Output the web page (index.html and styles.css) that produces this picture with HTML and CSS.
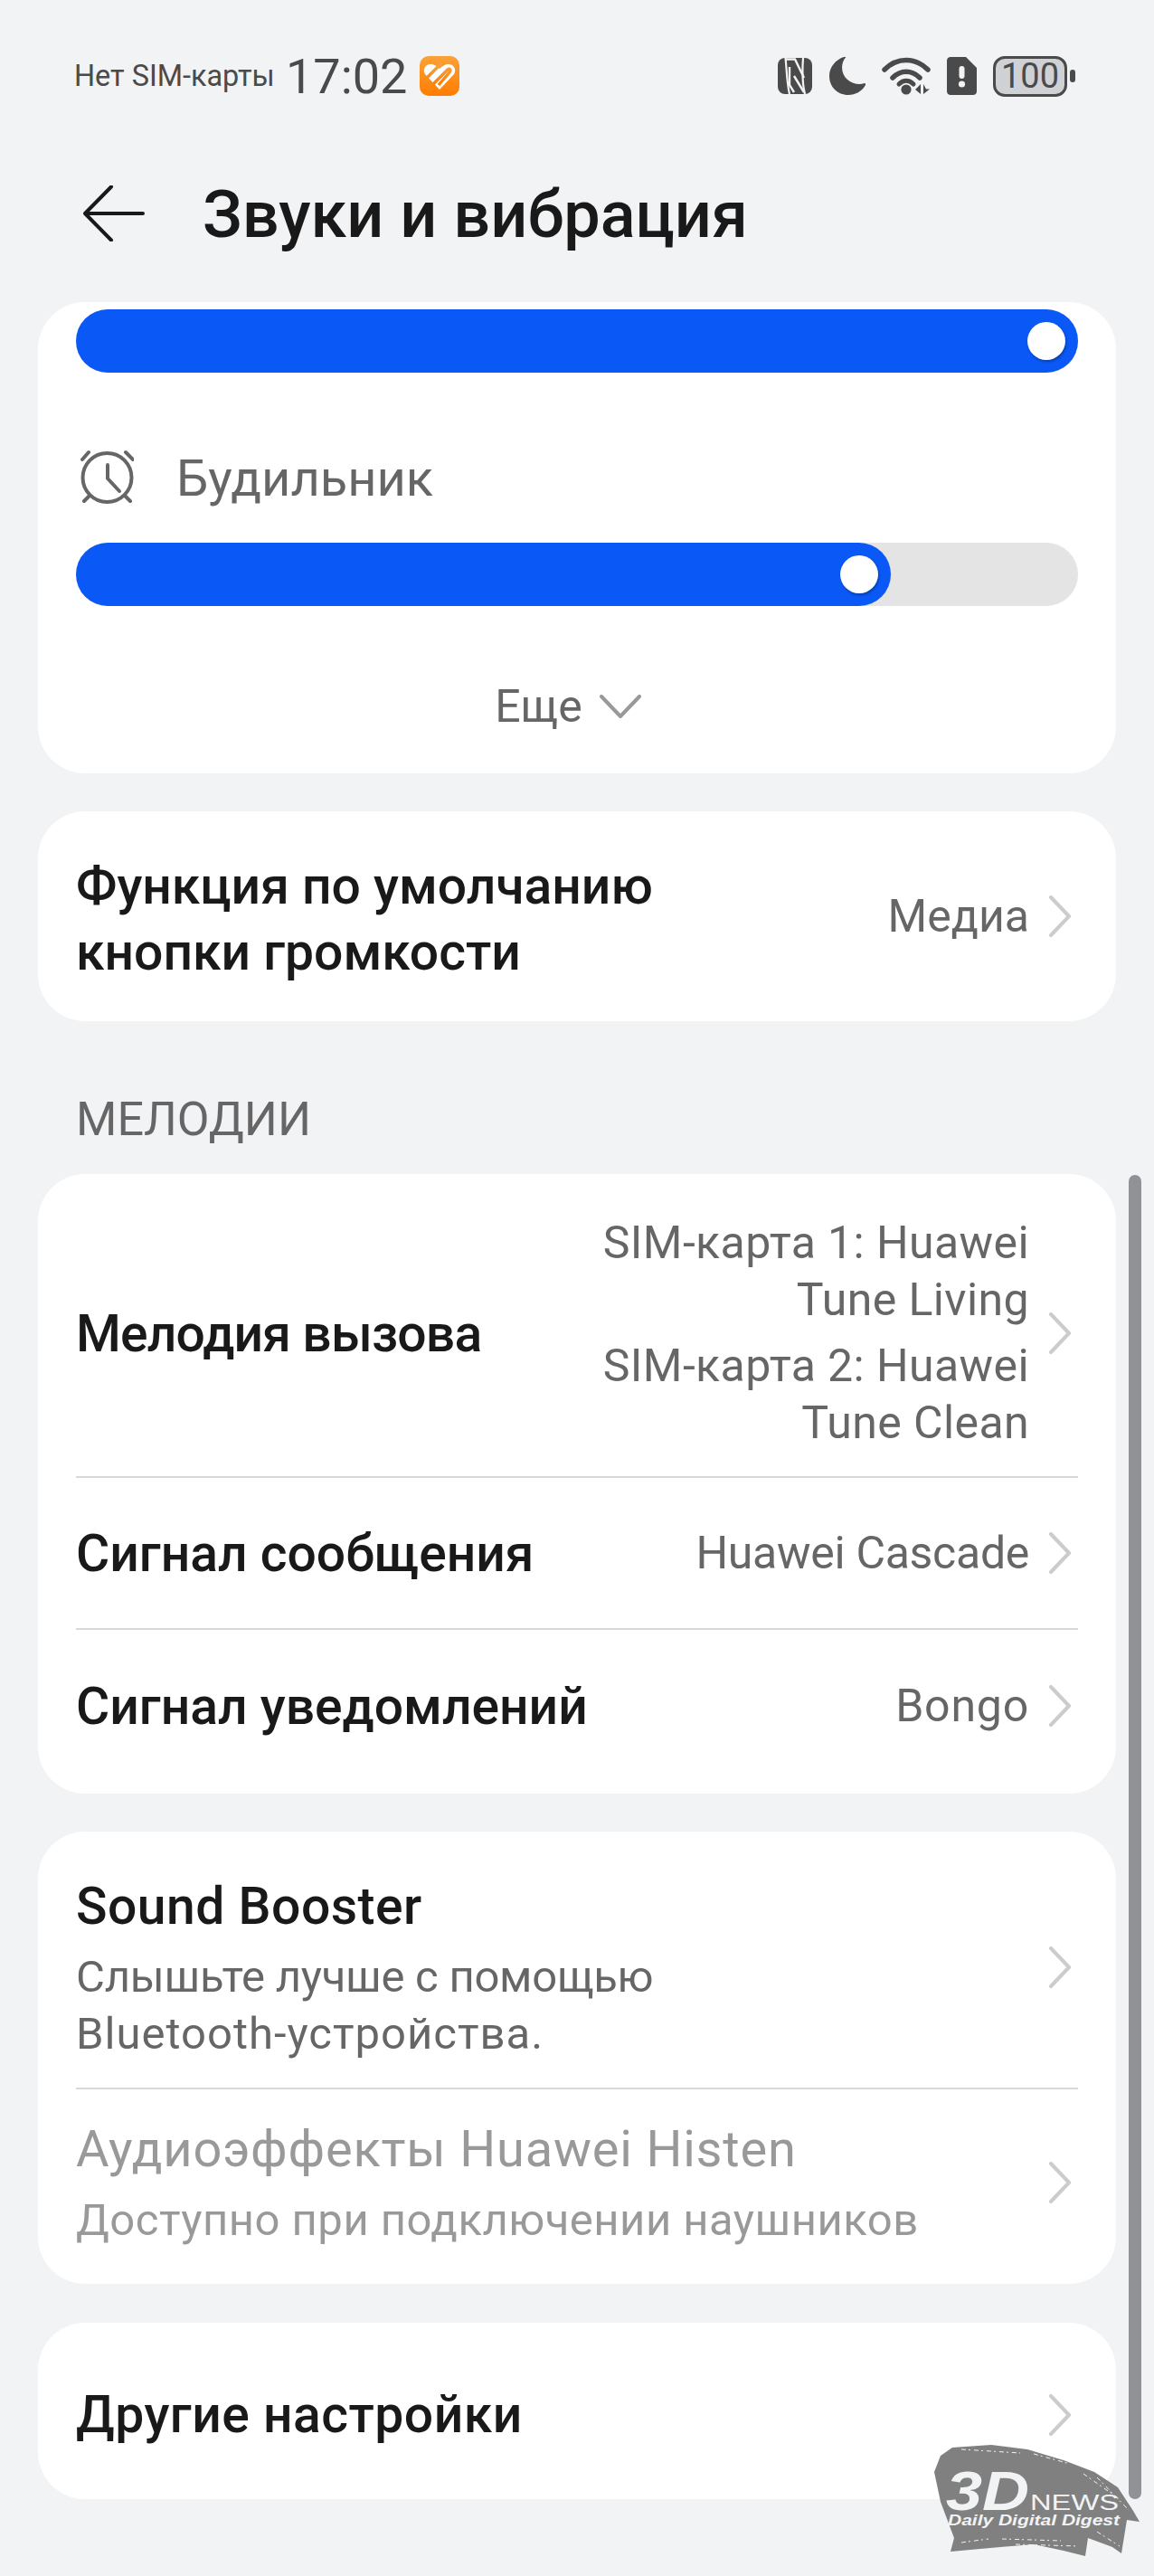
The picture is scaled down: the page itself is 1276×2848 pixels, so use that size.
FILE: index.html
```html
<!DOCTYPE html>
<html lang="ru">
<head>
    <meta charset="UTF-8">
    <meta name="viewport" content="width=device-width, initial-scale=1.0">
    <title>Звуки и вибрация</title>
    <link rel="stylesheet" href="styles.css">
</head>
<body>
    <div class="screen">
        <div class="status-bar">
            <span class="carrier">Нет SIM-карты</span>
            <span class="clock">17:02</span>
            <svg class="health-icon" viewBox="0 0 44 44">
                <defs>
                    <linearGradient id="healthFill" x1="0" y1="0" x2="0" y2="1">
                        <stop offset="0" stop-color="#f9a23a"/>
                        <stop offset="1" stop-color="#ff7d00"/>
                    </linearGradient>
                </defs>
                <rect width="44" height="44" rx="10" fill="url(#healthFill)"/>
                <path d="M22 37 L6 20 C3 15 6 9 12 9 C16 9 19 11 22 14 C25 11 28 9 32 9 C38 9 41 15 38 20 Z" fill="#fff"/>
                <path d="M8 24 L23 9 M15 31 L31 15 C33 13 35 15 33 18 L21 32" stroke="url(#healthFill)" stroke-width="3.4" fill="none"/>
            </svg>
            <div class="status-icons">
                <svg class="icon-nfc" viewBox="0 0 38 40">
                    <rect width="38" height="40" rx="8" fill="#4a4a4a"/>
                    <path d="M8.5 0 C10 14 10 28 13 40 M28 0 C27 14 27 28 30 40" fill="none" stroke="#f1f3f5" stroke-width="2.2"/>
                    <path d="M9 1.5 L19 1.5 L29 22 M13 10 L13 30 L18 38 M18 20 L29 38" fill="none" stroke="#f1f3f5" stroke-width="2.4"/>
                </svg>
                <svg class="icon-moon" viewBox="0 0 40 42">
                    <path d="M18 0.6 C12 8 13 19 20 25 C26 30 33 31 39 29 C40 29 40.5 30 40 31 C36 38 29 42 21 42 C9 42 0 33 0 21 C0 11 7 3 16 0 C18 -0.5 18.6 0 18 0.6 Z" fill="#4a4a4a"/>
                </svg>
                <svg class="icon-wifi" viewBox="0 0 55 42">
                    <path d="M3 14 C17 0 37 0 51 14" fill="none" stroke="#4a4a4a" stroke-width="5.5" stroke-linecap="round"/>
                    <path d="M12 23 C21 14 33 14 42 23" fill="none" stroke="#4a4a4a" stroke-width="5.5" stroke-linecap="round"/>
                    <path d="M19 30 C24 25 30 25 35 30" fill="none" stroke="#4a4a4a" stroke-width="5" stroke-linecap="round"/>
                    <circle cx="27" cy="36" r="5.6" fill="#4a4a4a"/>
                    <path d="M43 30 L43 41 L37 36 Z M46 30 L46 41 L53 35.5 L49 35.5 Z" fill="#4a4a4a"/>
                </svg>
                <svg class="icon-sim" viewBox="0 0 33 42">
                    <path d="M4 0 L21 0 L33 12 L33 38 C33 40.5 31 42 29 42 L4 42 C2 42 0 40.5 0 38 L0 4 C0 1.5 2 0 4 0 Z" fill="#4a4a4a"/>
                    <rect x="13.5" y="10" width="6" height="14" rx="3" fill="#f1f3f5"/>
                    <circle cx="16.5" cy="30" r="3.6" fill="#f1f3f5"/>
                </svg>
                <div class="battery">
                    <div class="battery-body">100</div>
                    <div class="battery-nub"></div>
                </div>
            </div>
        </div>

        <header class="title-bar">
            <svg class="back-arrow" viewBox="0 0 68 62">
                <path d="M31 1.5 L2 31 L31 60.5 M2 31 L66 31" fill="none" stroke="#191919" stroke-width="4" stroke-linecap="round" stroke-linejoin="round"/>
            </svg>
            <h1>Звуки и вибрация</h1>
        </header>

        <section class="card volume-card">
            <div class="slider">
                <div class="slider-fill" style="width: 100%"><span class="thumb"></span></div>
            </div>
            <div class="volume-label">
                <svg class="alarm-icon" viewBox="0 0 60 64">
                    <circle cx="30.5" cy="31" r="27" fill="none" stroke="#666" stroke-width="4"/>
                    <path d="M31 17 L31 32 L44 46" fill="none" stroke="#666" stroke-width="4" stroke-linecap="round" stroke-linejoin="round"/>
                    <path d="M3 11 L10 3 M51 3 L59 11 M5 57 L11 51 M50 51 L56 57" fill="none" stroke="#666" stroke-width="4" stroke-linecap="round"/>
                </svg>
                <span>Будильник</span>
            </div>
            <div class="slider">
                <div class="slider-fill" style="width: 81.3%"><span class="thumb"></span></div>
            </div>
            <div class="more-row">
                <span>Еще</span>
                <svg class="more-chevron" viewBox="0 0 46 26">
                    <path d="M2 2 L23 24 L44 2" fill="none" stroke="#999" stroke-width="4" stroke-linecap="round" stroke-linejoin="round"/>
                </svg>
            </div>
        </section>

        <section class="card key-card">
            <div class="row key-row">
                <div class="row-title">Функция по умолчанию<br>кнопки громкости</div>
                <div class="row-value">Медиа</div>
                <svg class="chevron" viewBox="0 0 24 46"><path d="M2 2 L22 23 L2 44" fill="none" stroke="#ccc" stroke-width="4" stroke-linecap="round" stroke-linejoin="round"/></svg>
            </div>
        </section>

        <h2 class="section-title">МЕЛОДИИ</h2>

        <section class="card tones-card">
            <div class="row ringtone-row">
                <div class="row-title title-tight">Мелодия вызова</div>
                <div class="row-value sim-values">
                    <div>SIM-карта 1: Huawei</div>
                    <div>Tune Living</div>
                    <div class="sim-second">SIM-карта 2: Huawei</div>
                    <div>Tune Clean</div>
                </div>
                <svg class="chevron" viewBox="0 0 24 46"><path d="M2 2 L22 23 L2 44" fill="none" stroke="#ccc" stroke-width="4" stroke-linecap="round" stroke-linejoin="round"/></svg>
            </div>
            <div class="row message-row">
                <div class="row-title">Сигнал сообщения</div>
                <div class="row-value value-tight">Huawei Cascade</div>
                <svg class="chevron" viewBox="0 0 24 46"><path d="M2 2 L22 23 L2 44" fill="none" stroke="#ccc" stroke-width="4" stroke-linecap="round" stroke-linejoin="round"/></svg>
            </div>
            <div class="row notify-row">
                <div class="row-title">Сигнал уведомлений</div>
                <div class="row-value value-wide">Bongo</div>
                <svg class="chevron" viewBox="0 0 24 46"><path d="M2 2 L22 23 L2 44" fill="none" stroke="#ccc" stroke-width="4" stroke-linecap="round" stroke-linejoin="round"/></svg>
            </div>
        </section>

        <section class="card audio-card">
            <div class="row booster-row">
                <div class="row-text">
                    <div class="row-title title-wide">Sound Booster</div>
                    <div class="row-sub sub-tight">Слышьте лучше с помощью</div>
                    <div class="row-sub sub-second">Bluetooth-устройства.</div>
                </div>
                <svg class="chevron" viewBox="0 0 24 46"><path d="M2 2 L22 23 L2 44" fill="none" stroke="#ccc" stroke-width="4" stroke-linecap="round" stroke-linejoin="round"/></svg>
            </div>
            <div class="row histen-row disabled">
                <div class="row-text">
                    <div class="row-title">Аудиоэффекты Huawei Histen</div>
                    <div class="row-sub">Доступно при подключении наушников</div>
                </div>
                <svg class="chevron" viewBox="0 0 24 46"><path d="M2 2 L22 23 L2 44" fill="none" stroke="#ccc" stroke-width="4" stroke-linecap="round" stroke-linejoin="round"/></svg>
            </div>
        </section>

        <section class="card other-card">
            <div class="row other-row">
                <div class="row-title title-wide">Другие настройки</div>
                <svg class="chevron" viewBox="0 0 24 46"><path d="M2 2 L22 23 L2 44" fill="none" stroke="#ccc" stroke-width="4" stroke-linecap="round" stroke-linejoin="round"/></svg>
            </div>
        </section>

        <div class="scrollbar"></div>

        <svg class="watermark" viewBox="0 0 228 125">
            <path d="M20 3 L63 0 L103 5 L143 17 L177 30 L203 47 L220 73 L227 85 L213 83 L207 120 L197 113 L170 103 L167 123 L143 117 L110 110 L73 113 L18 118 L22 103 L7 63 L0 30 L7 12 Z" fill="#808080"/>
            <path d="M30 5 L95 9 M110 10 L150 21 M165 32 L205 60 M180 36 L215 72 M75 104 L140 106 M90 110 L160 112 M30 108 L60 104 M180 96 L205 112" fill="none" stroke="#f1f3f5" stroke-width="1" stroke-dasharray="5 3 2 4"/>
            <text class="wm-big" x="13" y="72" textLength="92" lengthAdjust="spacingAndGlyphs">3D</text>
            <text class="wm-news" x="106" y="72" textLength="98" lengthAdjust="spacingAndGlyphs">NEWS</text>
            <text class="wm-tag" x="15" y="89" textLength="190" lengthAdjust="spacingAndGlyphs">Daily Digital Digest</text>
        </svg>
    </div>
</body>
</html>
```

FILE: styles.css
```css
* {
    box-sizing: border-box;
}
body {
    margin: 0;
    padding: 0;
    background-color: #f1f3f5;
    font-family: Roboto, "Noto Sans", sans-serif;
    color: #191919;
}
h1, h2 {
    margin: 0;
}
.screen {
    position: relative;
    width: 1276px;
    height: 2848px;
    overflow: hidden;
    padding: 0 42px;
}

/* status bar */
.status-bar {
    display: flex;
    align-items: center;
    height: 60px;
    margin: 54px 0 0 40px;
    color: #4a4a4a;
}
.carrier {
    font-size: 32.4px;
    width: 234px;
    white-space: nowrap;
}
.clock {
    font-size: 54px;
    width: 148px;
}
.health-icon {
    width: 44px;
    height: 44px;
}
.status-icons {
    display: flex;
    align-items: center;
    margin-left: auto;
    margin-right: 45px;
}
.icon-nfc {
    width: 38px;
    height: 40px;
    margin-right: 19px;
}
.icon-moon {
    width: 40px;
    height: 42px;
    margin-right: 18px;
}
.icon-wifi {
    width: 55px;
    height: 42px;
    margin-right: 17px;
}
.icon-sim {
    width: 33px;
    height: 42px;
    margin-right: 18px;
}
.battery {
    display: flex;
    align-items: center;
}
.battery-body {
    width: 82px;
    height: 45px;
    border: 3px solid #4a4a4a;
    border-radius: 13px;
    background: #d0d1d4;
    font-size: 38px;
    line-height: 39px;
    text-align: center;
}
.battery-nub {
    width: 6px;
    height: 14px;
    margin-left: 3px;
    border-radius: 3px;
    background: #4a4a4a;
}

/* title */
.title-bar {
    display: flex;
    align-items: center;
    height: 100px;
    margin: 72px 0 0 50px;
}
.back-arrow {
    width: 68px;
    height: 62px;
    margin-right: 64px;
}
.title-bar h1 {
    padding-top: 4px;
    font-size: 72px;
    font-weight: 500;
    line-height: 1;
}

/* cards */
.card {
    background: #fff;
    border-radius: 52px;
    overflow: hidden;
}
.volume-card {
    height: 521px;
    margin-top: 48px;
    padding: 8px 42px 0;
}
.slider {
    height: 70px;
    border-radius: 35px;
    background: #e4e4e4;
}
.slider-fill {
    display: flex;
    align-items: center;
    justify-content: flex-end;
    height: 100%;
    padding-right: 14px;
    border-radius: 35px;
    background: #0a59f7;
}
.thumb {
    width: 42px;
    height: 42px;
    border-radius: 50%;
    background: #fff;
    box-shadow: 1px 2px 3px rgba(0, 0, 0, 0.3);
}
.volume-label {
    display: flex;
    align-items: center;
    height: 188px;
    padding: 46px 0 0 4px;
    color: #666;
    font-size: 56px;
}
.alarm-icon {
    width: 60px;
    height: 64px;
    margin-right: 47px;
}
.more-row {
    display: flex;
    align-items: center;
    justify-content: center;
    gap: 19px;
    height: 120px;
    margin: 51px 0 0 -20px;
    color: #666;
    font-size: 50px;
}
.more-chevron {
    width: 46px;
    height: 26px;
}
.key-card {
    height: 232px;
    margin-top: 42px;
}
.section-title {
    height: 126px;
    padding: 87px 0 0 42px;
    font-size: 52px;
    line-height: 44px;
    font-weight: 400;
    color: #666;
    margin-bottom: 43px;
}
.tones-card {
    height: 685px;
}
.audio-card {
    height: 500px;
    margin-top: 42px;
}
.other-card {
    height: 195px;
    margin-top: 43px;
}

/* rows */
.row {
    display: flex;
    align-items: center;
    margin: 0 42px;
    border-bottom: 2px solid #d8d8d8;
}
.row:last-child {
    border-bottom: none;
}
.key-row {
    height: 100%;
    padding-top: 6px;
}
.key-row .row-value,
.key-row .chevron {
    margin-bottom: 6px;
}
.ringtone-row {
    height: 336px;
    padding-top: 18px;
}
.message-row {
    height: 168px;
}
.notify-row {
    height: 181px;
    padding-bottom: 13px;
}
.booster-row {
    height: 285px;
    padding-top: 17px;
}
.histen-row {
    height: 215px;
    padding-bottom: 9px;
}
.other-row {
    height: 100%;
    padding-top: 8px;
}
.row-title {
    font-size: 57px;
    line-height: 73px;
    font-weight: 500;
    white-space: nowrap;
}
.title-tight {
    letter-spacing: -0.8px;
}
.title-wide {
    letter-spacing: 0.5px;
}
.row-value {
    margin-left: auto;
    font-size: 50px;
    line-height: 63px;
    color: #666;
    text-align: right;
    white-space: nowrap;
}
.value-tight {
    letter-spacing: -0.3px;
}
.value-wide {
    letter-spacing: 0.8px;
}
.sim-values {
    letter-spacing: 0.4px;
}
.sim-second {
    margin-top: 10px;
}
.row-text {
    flex: 1;
}
.row-sub {
    margin-top: 10px;
    font-size: 49px;
    line-height: 63px;
    color: #666;
    white-space: nowrap;
}
.sub-tight {
    letter-spacing: -0.25px;
}
.sub-second {
    margin-top: 0;
    letter-spacing: 1px;
}
.disabled .row-title,
.disabled .row-sub {
    color: #999;
}
.disabled .row-title {
    font-size: 56px;
    font-weight: 400;
    letter-spacing: 0.8px;
}
.disabled .row-sub {
    letter-spacing: 0.5px;
}
.chevron {
    width: 24px;
    height: 46px;
    margin: 0 8px 0 auto;
    flex-shrink: 0;
}
.row-value + .chevron {
    margin-left: 22px;
}

/* overlays */
.scrollbar {
    position: absolute;
    left: 1248px;
    top: 1299px;
    width: 14px;
    height: 1464px;
    border-radius: 7px;
    background: #919295;
}
.watermark {
    position: absolute;
    left: 1033px;
    top: 2703px;
    width: 228px;
    height: 125px;
}
.wm-big {
    font-family: "Liberation Sans", sans-serif;
    font-size: 62px;
    font-weight: 700;
    font-style: italic;
    fill: #f1f3f5;
}
.wm-news {
    font-family: "Liberation Sans", sans-serif;
    font-size: 24px;
    fill: #f1f3f5;
}
.wm-tag {
    font-family: "Liberation Sans", sans-serif;
    font-size: 17px;
    font-weight: 700;
    font-style: italic;
    fill: #f1f3f5;
}
```
